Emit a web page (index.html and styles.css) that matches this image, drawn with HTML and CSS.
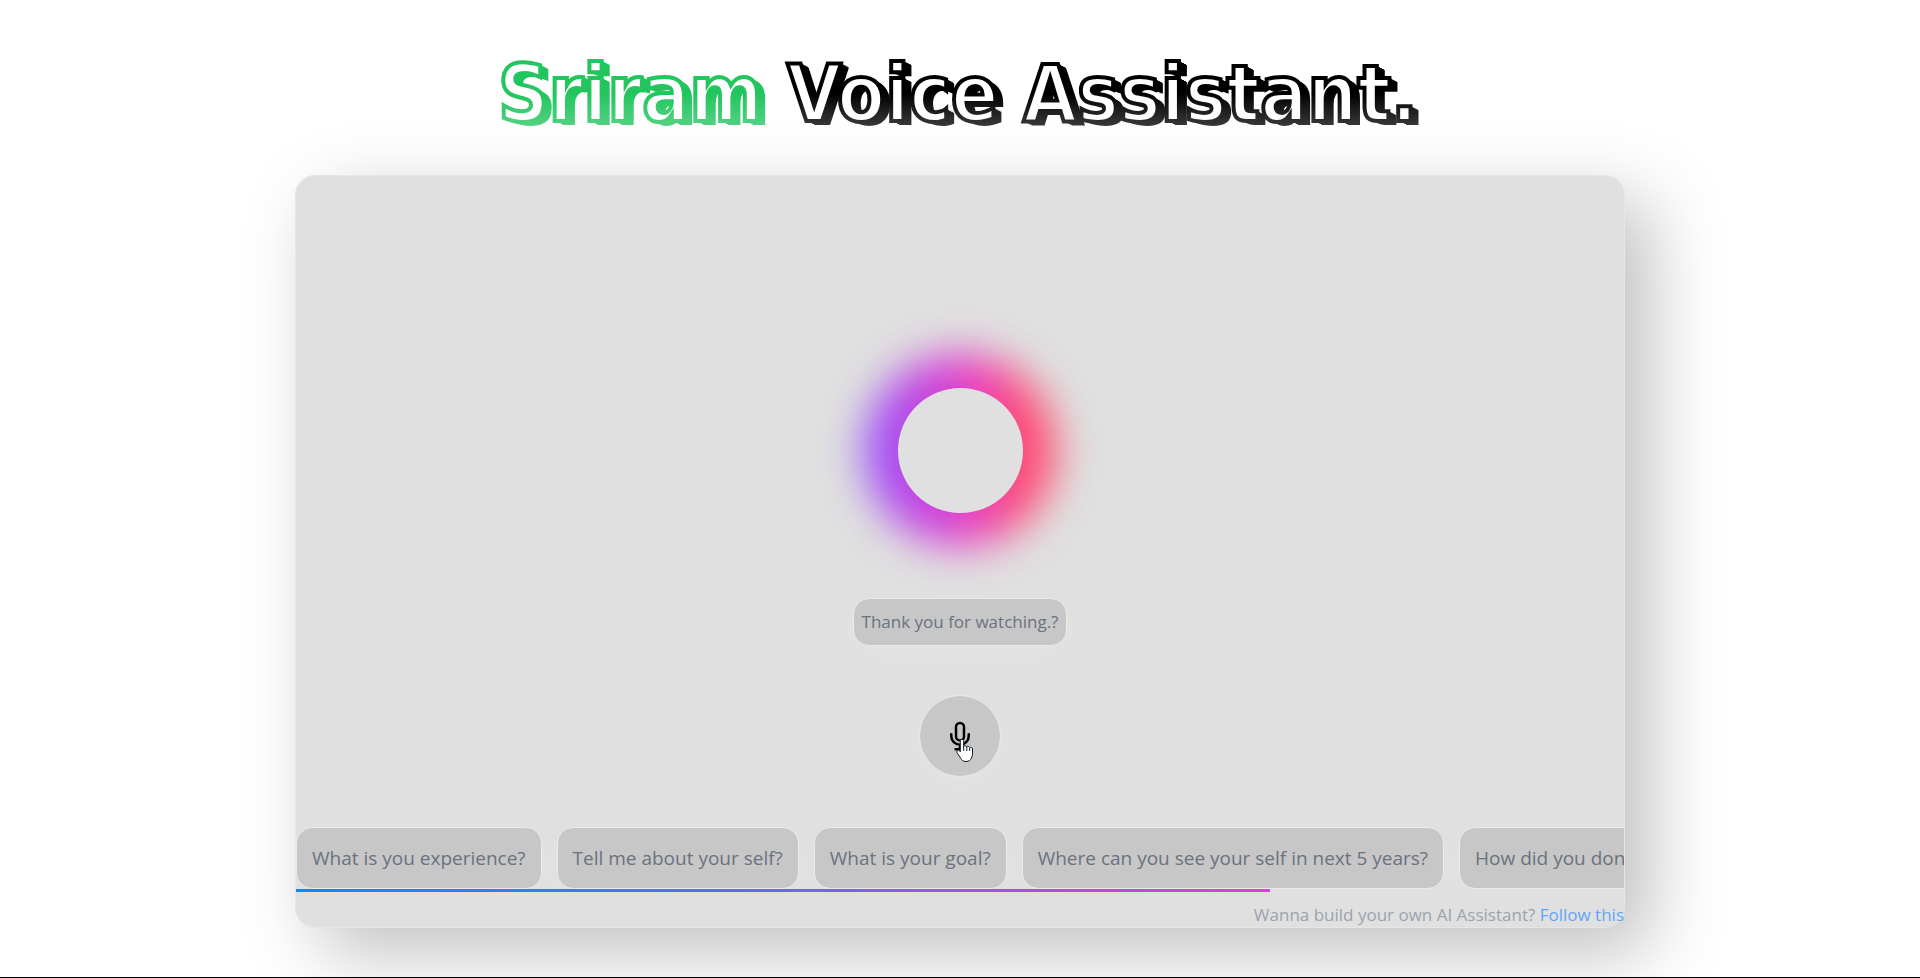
FILE: index.html
```html
<!DOCTYPE html>
<html lang="en">
<head>
<meta charset="utf-8">
<title>Sriram Voice Assistant</title>
<link rel="stylesheet" href="styles.css">
</head>
<body>
<main class="page">
  <h1 class="title"><span class="name">Sriram</span> Voice Assistant.</h1>
  <section class="card">
    <div class="stage">
      <div class="orb"></div>
      <p class="caption">Thank you for watching.?</p>
      <button class="mic" type="button" aria-label="Speak">
        <svg class="mic-icon" viewBox="0 0 24 24" aria-hidden="true"><rect x="8.800" y="1.500" width="6.400" height="14" rx="3.200"/><path d="M5 10.500V12a7 7 0 0 0 14 0v-1.500M12 19v3M8.500 22.500h7"/></svg>
        <svg class="pointer" viewBox="0 0 18 24" aria-hidden="true"><path d="M6 1.500c1 0 1.700.7 1.700 1.700v5c.3-.6 3-.6 3.100.6.500-.7 2.700-.5 2.900.7.800-.5 2.800-.2 2.800 1.500v5.500c0 1.500-.8 2.500-1.300 3.800-.5 1.800-2.200 3.200-5.200 3.200s-4.200-1.300-5.200-3.200L1.500 15.500c-.8-1.500-.7-2.700.3-3.100 1-.4 1.900.3 2.500 1.400V3.200c0-1 .7-1.700 1.700-1.700z"/><path d="M7.700 8v5M10.800 9v4M13.700 10v3"/></svg>
      </button>
    </div>
    <div class="prompts">
      <button class="chip" type="button">What is you experience?</button>
      <button class="chip" type="button">Tell me about your self?</button>
      <button class="chip" type="button">What is your goal?</button>
      <button class="chip" type="button">Where can you see your self in next 5 years?</button>
      <button class="chip" type="button">How did you done this?</button>
    </div>
    <div class="progress"></div>
    <p class="note">Wanna build your own AI Assistant? <a href="#">Follow this</a></p>
  </section>
</main>
</body>
</html>
```
FILE: styles.css
```css
* { box-sizing: border-box; }

body {
  margin: 0;
  background: #fff;
  font-family: "Open Sans", "Noto Sans", sans-serif;
}

.page {
  display: flex;
  flex-direction: column;
  align-items: center;
  min-height: 100vh;
  padding: 49px 16px;
  border-bottom: 1px solid #000;
  overflow: hidden;
}

.title {
  position: relative;
  z-index: 1;
  margin: 0;
  padding: 0 8px 8px 4px;
  font: bold 78px/90px "DejaVu Sans Condensed", "DejaVu Sans", sans-serif;
  color: #fff;
  -webkit-text-stroke: 4px var(--ink);
  --ink: #000;
  text-shadow: 1px 0 var(--ink), 2px 1px var(--ink), 3px 1px var(--ink),
    4px 2px var(--ink), 5px 2px var(--ink), 6px 3px var(--ink),
    7px 3px var(--ink), 8px 4px var(--ink);
  -webkit-mask-image: linear-gradient(#000 45%, rgba(0, 0, 0, .7) 90%);
  mask-image: linear-gradient(#000 45%, rgba(0, 0, 0, .7) 90%);
}

.name {
  --ink: #22c55e;
  -webkit-text-stroke: 4px var(--ink);
  text-shadow: 1px 0 var(--ink), 2px 1px var(--ink), 3px 1px var(--ink),
    4px 2px var(--ink), 5px 2px var(--ink), 6px 3px var(--ink),
    7px 3px var(--ink), 8px 4px var(--ink);
}

.card {
  flex: 1;
  display: flex;
  flex-direction: column;
  width: 100%;
  max-width: 1330px;
  margin-top: 28px;
  border: 1px solid #e6e6e6;
  border-radius: 20px;
  background: #e0e0e0;
  box-shadow: 25px 25px 75px rgba(0, 0, 0, .25);
}

.stage {
  flex: 1;
  display: flex;
  flex-direction: column;
  align-items: center;
  justify-content: flex-end;
  padding-bottom: 50px;
}

.orb {
  display: grid;
  place-items: center;
  margin-bottom: 52px;
}

.orb::before,
.orb::after {
  content: "";
  grid-area: 1 / 1;
  border-radius: 50%;
}

.orb::before {
  width: 192px;
  height: 192px;
  background: linear-gradient(90deg, #9050ff 5%, #b048ea 18%, #dc3cd2 48%, #f13fb0 62%, #ff4a6c 84%);
  filter: blur(21px);
}

.orb::after {
  z-index: 1;
  width: 125px;
  height: 125px;
  background: #e0e0e0;
}

.caption,
.mic,
.chip {
  border: 1px solid #ebebeb;
  background: #c7c7c7;
  color: #6b7280;
  box-shadow: 0 8px 32px rgba(255, 255, 255, .12);
}

.caption {
  z-index: 1;
  margin: 0 0 49px;
  padding: 10px 8px;
  border-radius: 16px;
  font-size: 17px;
  line-height: 26px;
}

.mic {
  position: relative;
  display: grid;
  place-items: center;
  width: 82px;
  height: 82px;
  padding: 0;
  border-radius: 50%;
}

.mic-icon {
  width: 30px;
  height: 30px;
  overflow: visible;
  fill: none;
  stroke: #000;
  stroke-width: 2;
  stroke-linecap: round;
  stroke-linejoin: round;
}

.pointer {
  position: absolute;
  left: 36px;
  top: 42px;
  width: 18px;
  height: 24px;
  fill: #fff;
  stroke: #111827;
  stroke-width: 1;
}

.prompts {
  display: flex;
  gap: 15px;
  overflow: hidden;
}

.chip {
  flex: none;
  padding: 16px 15px;
  border-radius: 16px;
  font: 19px/28px "Open Sans", "Noto Sans", sans-serif;
}

.progress {
  width: calc(100% * 11 / 15);
  height: 3px;
  background: linear-gradient(90deg, #0b8bf8, #6f66ea 52%, #dc3fd6);
}

.note {
  margin: 0;
  padding: 11px 0 0;
  font-size: 17px;
  line-height: 24px;
  text-align: right;
  color: #9ca3af;
}

.note a {
  color: #60a5fa;
  text-decoration: none;
}
```
